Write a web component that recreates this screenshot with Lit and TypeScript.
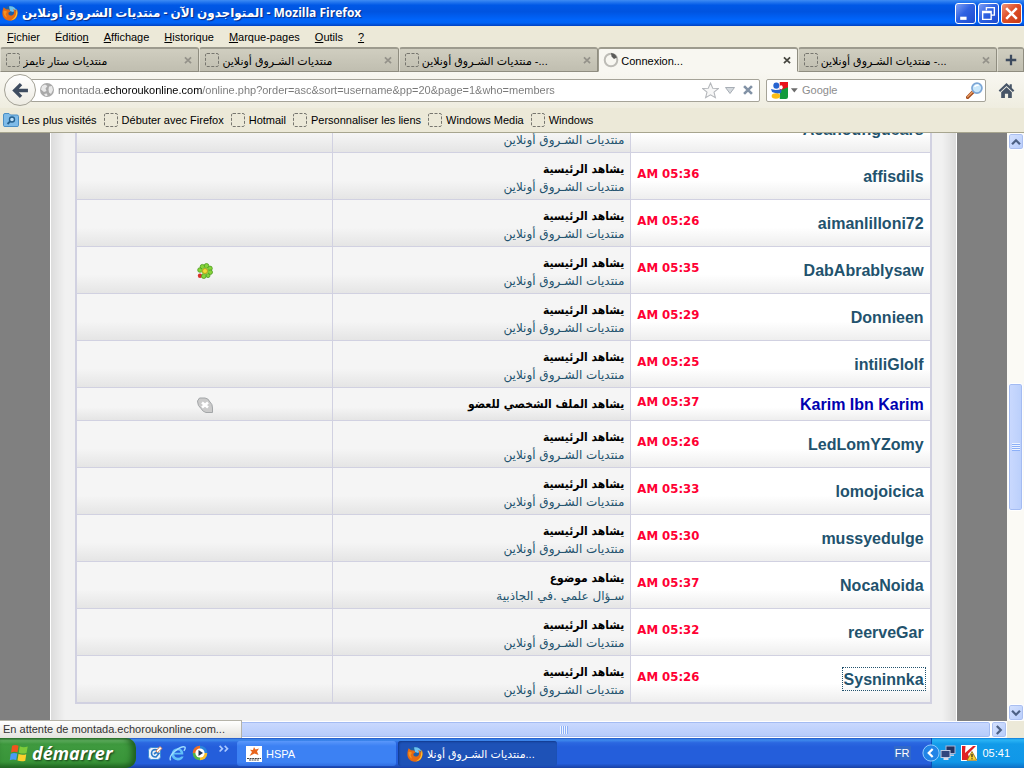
import { LitElement, html, svg, css, nothing } from "lit";
import { customElement } from "lit/decorators.js";
import { classMap } from "lit/directives/class-map.js";

const FORUM = "منتديات الشـروق أونلاين";
const HOME_VIEW = "يشاهد الرئيسية";

interface Member {
  name: string;
  time: string;
  action: string;
  target?: string;
  icon?: "flower" | "offline";
  admin?: boolean;
  focused?: boolean;
}

const members: Member[] = [
  { name: "Acanounguears", time: "", action: "", target: FORUM },
  { name: "affisdils", time: "AM 05:36", action: HOME_VIEW, target: FORUM },
  { name: "aimanlilloni72", time: "AM 05:26", action: HOME_VIEW, target: FORUM },
  { name: "DabAbrablysaw", time: "AM 05:35", action: HOME_VIEW, target: FORUM, icon: "flower" },
  { name: "Donnieen", time: "AM 05:29", action: HOME_VIEW, target: FORUM },
  { name: "intiliGlolf", time: "AM 05:25", action: HOME_VIEW, target: FORUM },
  { name: "Karim Ibn Karim", time: "AM 05:37", action: "يشاهد الملف الشخصي للعضو", icon: "offline", admin: true },
  { name: "LedLomYZomy", time: "AM 05:26", action: HOME_VIEW, target: FORUM },
  { name: "lomojoicica", time: "AM 05:33", action: HOME_VIEW, target: FORUM },
  { name: "mussyedulge", time: "AM 05:30", action: HOME_VIEW, target: FORUM },
  { name: "NocaNoida", time: "AM 05:37", action: "يشاهد موضوع", target: "سـؤال علمي .في الجاذبية" },
  { name: "reerveGar", time: "AM 05:32", action: HOME_VIEW, target: FORUM },
  { name: "Sysninnka", time: "AM 05:26", action: HOME_VIEW, target: FORUM, focused: true },
];

const icon = (size: number, body: unknown) =>
  html`<svg width=${size} height=${size} viewBox="0 0 16 16" aria-hidden="true">${body}</svg>`;

const firefox = svg`
  <circle cx="8" cy="8" r="7.2" fill="#1d5fa8"/>
  <path d="M7 1.4C10 .6 13 2 14 4.500L11 7 8 6Z" fill="#6cc3f0"/>
  <path d="M1.600 2.200 4 4.200 7 4.600 8.600 6.400 6.600 7.400 6.400 9.200C7.600 11 10.400 11 11.600 9.200 12.600 7.600 12.200 5.400 11 4 13.200 4.600 14 6 14.200 7.200L14.600 3.800C16.600 8 15.600 15.600 8 15.800 2.600 15.600.2 11.600.4 8.200.4 5.600 1 4.200 1.600 2.200Z" fill="#e66a12"/>
  <path d="M14.600 3.800C16.600 8 15 14.800 8.600 15.400 12 13.800 14.200 11 14.200 7.200Z" fill="#fbc531"/>
  <path d="M1.600 6C2.400 5.400 4 5.800 5 6.800L3.600 9 5 12.600C3 12 1.200 9 1.600 6Z" fill="#f7931e"/>`;

const placeholder = svg`<rect x="1.500" y="1.500" width="13" height="13" rx="1.500" fill="none" stroke="#77766f" stroke-dasharray="3 1.500"/>`;
const cross = svg`<path d="M4.500 5 11.500 11.500M11.500 5 4.500 11.500" stroke="currentColor" stroke-width="2" fill="none"/>`;
const throbber = svg`
  <circle cx="8" cy="8" r="6.300" fill="none" stroke="#bdbcb6" stroke-width="2"/>
  <path d="M8 1A7 7 0 0 1 14 5.500L11 7 8.500 4.500Z" fill="#5b5b59"/>`;
const backArrow = svg`<path d="M8.500 2 2.500 8 8.500 14M3.500 8H15" stroke="#3e4c60" stroke-width="3.200" fill="none"/>`;
const globe = svg`
  <circle cx="8" cy="8" r="7" fill="#a9a9a9"/>
  <path d="M3 4 6 2.500 8.500 4 6.500 6.500 7.500 9 5 10 2 7.500ZM10 4.500 13 4 14 8 12 12 10 10.500 9.500 7.500ZM5 12 8 11.500 8.500 14 6.500 14Z" fill="#e9e9e9"/>`;
const star = svg`<path d="M8 1 10.100 5.800 15.300 6.200 11.300 9.600 12.600 14.800 8 12 3.400 14.800 4.700 9.600.7 6.200 5.900 5.800Z" fill="#f7f7f7" stroke="#b4b7bb"/>`;
const dropdown = svg`<path d="M3.500 5.500H12.500L8 11.500Z" fill="#d5dade" stroke="#a7adb5"/>`;
const stop = svg`<path d="M3.500 3.500 12.500 12.500M12.500 3.500 3.500 12.500" stroke="#8292a6" stroke-width="3"/>`;
const google = svg`
  <path d="M8 0H16V8H8Z" fill="#e8111a"/><path d="M8 8 16 5V14Q16 16 14 16H8Z" fill="#129a3c"/>
  <path d="M0 0H8V16H0Z" fill="#fff"/>
  <ellipse cx="5" cy="3.400" rx="2.800" ry="3" fill="#2563d0"/><ellipse cx="9.500" cy="5" rx="1.500" ry="2" fill="#fff"/>
  <path d="M0 6.500 4 7.500 10 7 9.500 10 6 11 1 9.500Z" fill="#2563d0"/>
  <ellipse cx="4.600" cy="13.200" rx="4" ry="2.500" fill="#fbbd16"/>`;
const magnifier = svg`
  <path d="M1.500 14.500 7 9" stroke="#a44c1d" stroke-width="3.200" stroke-linecap="round"/>
  <path d="M1.500 14 6.500 9" stroke="#eda36a" stroke-width="1.200" stroke-linecap="round"/>
  <circle cx="10.300" cy="5.700" r="4.700" fill="#c9e7fb" stroke="#7ba6d6" stroke-width="1.600"/>
  <path d="M8 4.500Q9.500 2.600 12 3.200" stroke="#fff" stroke-width="1.400" fill="none"/>`;
const house = svg`<path d="M8 1 .6 8 2 9.400 8 3.800 14 9.400 15.400 8 13 5.700V2H11V3.800Z" fill="#475567"/><path d="M8 5 3 9.600V15H6.500V11H9.500V15H13V9.600Z" fill="#475567"/>`;
const folder = svg`
  <path d="M.5 3Q.5 1.500 2 1.500H6L7.500 3H14Q15.500 3 15.500 4.500V13.500Q15.500 14.500 14 14.500H2Q.5 14.500.5 13.500Z" fill="#7fbbe8" stroke="#4b8fc6"/>
  <circle cx="9" cy="7.500" r="2.500" fill="#bfe2fa" stroke="#27618f" stroke-width="1.400"/><path d="M7 9.500 4.500 12" stroke="#27618f" stroke-width="1.800"/>`;
const flower = svg`
  <circle cx="3" cy="12.800" r="2.200" fill="#d8322c"/>
  <g fill="#86d43a" stroke="#4d9c1e" stroke-width=".8">
    <circle cx="9.500" cy="2.800" r="2.300"/><circle cx="13" cy="5.400" r="2.300"/><circle cx="13.200" cy="9.200" r="2.300"/>
    <circle cx="11" cy="12.600" r="2"/><circle cx="6.800" cy="13.200" r="2.300"/><circle cx="3" cy="7" r="2.300"/><circle cx="5.400" cy="3.600" r="2.200"/>
  </g>
  <circle cx="8" cy="8" r="3.600" fill="#86d43a"/><circle cx="8" cy="8" r="2.500" fill="#f3df3a" stroke="#bd8f1c" stroke-width=".8"/>`;
const offline = svg`
  <path d="M2.500 1H8Q11 1 13 5Q15.500 7 15.500 11V15.500H9Q6 15 4 11.500Q.5 9 .5 4Z" fill="#cbcbcb" stroke="#a3a6a8"/>
  <path d="M5 5.500 11 10.500M11 5.500 5 10.500" stroke="#fff" stroke-width="2.600"/>`;
const windowsFlag = svg`
  <path d="M2.500 2.200Q5 1 7.600 2.200L6.800 7.400Q4.200 6.400 1.600 7.500Z" fill="#f0541e"/>
  <path d="M8.600 2.600Q11.500 4 15 2.800L14 8Q11 9 7.800 7.700Z" fill="#7ccb3a"/>
  <path d="M1.400 8.500Q4 7.400 6.600 8.400L5.800 13.600Q3.200 12.600.6 13.700Z" fill="#4a9af5"/>
  <path d="M7.600 8.800Q10.800 10 13.800 9L13 14.200Q10 15.200 6.800 14Z" fill="#fbd02c"/>`;
const mailTool = svg`
  <rect x="1.500" y="2.500" width="12" height="12" rx="3" fill="#e8f1fb" stroke="#3b8ad6"/>
  <path d="M10.500 5Q5 3.500 4.500 8 4.500 12 9 12L12 8.500 9 7.500 7 9" fill="none" stroke="#2b79c8" stroke-width="1.600"/>
  <path d="M9 6 13 1.500 15 3.500 10.500 7.500Z" fill="#fff" stroke="#e0773c" stroke-width=".8"/>`;
const explorer = svg`
  <path d="M13.500 9H4.800Q5.500 12 8.500 12 10.500 12 11.500 10.800H13.800Q12.200 14.500 8.200 14.500 2.500 14 2.400 8.500 3 3.200 8.200 3 13.800 3.500 13.500 9ZM5 7.200H11Q10.500 5 8.200 5 5.600 5 5 7.200Z" fill="#62c0f8"/>
  <path d="M1.500 14.500Q-.5 11 6 5.500 12.500.5 15 2 15.800 3 14 5.500" fill="none" stroke="#9fdcff" stroke-width="1.300"/>`;
const mediaPlayer = svg`
  <circle cx="8" cy="8" r="7.300" fill="#2c84d8"/><path d="M8 .7A7.300 7.300 0 0 0 .7 8H8Z" fill="#ed6c25"/><path d="M.7 8A7.300 7.300 0 0 0 8 15.300V8Z" fill="#52b348"/><path d="M15.300 8A7.300 7.300 0 0 1 8 15.300V8Z" fill="#f7bd29"/>
  <circle cx="8" cy="8" r="4.600" fill="#fff"/><path d="M6.500 5 11 8 6.500 11Z" fill="#25344e"/>`;
const hspa = svg`
  <rect width="16" height="16" fill="#fff"/>
  <path d="M8 1 9.500 3.500 13 2.500 11 5.500 12.500 9 8.500 7.500 3.500 10 6 6 4 3.800 7 4Z" fill="#e8641b"/>
  <path d="M1 12.500H15M3 14H13" stroke="#444" stroke-dasharray="2 .6"/>`;
const network = svg`
  <rect x="6" y="1" width="9" height="7.500" fill="#23335f" stroke="#aab6d6"/><path d="M9 9.500H14V11H9Z" fill="#c8d0e2"/>
  <rect x="1" y="5.500" width="9" height="7" fill="#31457d" stroke="#c0cae2"/><path d="M3.500 13H8.500V15H3.500Z" fill="#d6dceb"/>`;
const antivirus = svg`
  <rect width="16" height="16" fill="#fff"/><path d="M1 1H4.500L4 8 12 1H15L7 9 9 15H1Z" fill="#df1f24"/>
  <path d="M11 6.500 15.800 15.300H6Z" fill="#fcd535" stroke="#8a6a11" stroke-width=".8"/><path d="M11 9V12.200M11 13.300V14.300" stroke="#222" stroke-width="1.200"/>`;
const chevron = (d: string) => svg`<path d=${d} stroke="#4d6185" stroke-width="2.600" fill="none"/>`;
const UP = "M3.500 10.500 8 6 12.500 10.500";
const DOWN = "M3.500 5.500 8 10 12.500 5.500";
const LEFT = "M10.500 3.500 6 8 10.500 12.500";
const RIGHT = "M5.500 3.500 10 8 5.500 12.500";

@customElement("title-bar")
class TitleBar extends LitElement {
  static styles = css`
    :host { display: block; }
    .bar {
      display: flex; align-items: center; gap: 4px; height: 26px; padding: 0 2px; box-sizing: border-box;
      background: linear-gradient(#3f8cf3 0, #2a7cf0 6%, #0058e6 20%, #0054e0 45%, #0064fa 75%, #0063f5 88%, #0040c0 100%);
    }
    h1 {
      flex: 1; margin: 0; color: #fff; font: bold 12px/26px "Open Sans", "DejaVu Sans", sans-serif;
      text-shadow: 1px 1px 1px #0a2a80; white-space: nowrap; overflow: hidden;
    }
    .buttons { display: flex; gap: 2px; }
    button {
      width: 21px; height: 21px; padding: 0; border: 1px solid #fff; border-radius: 3px; display: grid; place-items: center;
      background: linear-gradient(135deg, #7f9ff5, #2f62e2 45%, #1d4bcf); color: #fff;
    }
    .close { background: linear-gradient(135deg, #f0957a, #df4f28 45%, #c73a14); }
  `;
  render() {
    return html`<header class="bar">
      ${icon(16, firefox)}
      <h1>المتواجدون الآن - منتديات الشروق أونلاين - Mozilla Firefox</h1>
      <div class="buttons">
        <button aria-label="Réduire">${icon(17, svg`<path d="M3 11H9V14H3Z" fill="#fff"/>`)}</button>
        <button aria-label="Restaurer">${icon(17, svg`<path d="M6 5V2.500H13.500V9.500H11M5.500 2.500H14M2.500 6H10.500V13.500H2.500ZM2.500 7H10.500" stroke="#fff" stroke-width="1.300" fill="none"/>`)}</button>
        <button class="close" aria-label="Fermer">${icon(17, svg`<path d="M3 3 13 13M13 3 3 13" stroke="#fff" stroke-width="2.400"/>`)}</button>
      </div>
    </header>`;
  }
}

@customElement("browser-chrome")
class BrowserChrome extends LitElement {
  static styles = css`
    :host { display: block; background: #ece9d8; color: #000; font: 11px/14px "Liberation Sans", "DejaVu Sans", sans-serif; }
    button, input { font: inherit; color: inherit; margin: 0; padding: 0; border: 0; background: none; }
    svg { display: block; flex: none; }
    .menu { display: flex; gap: 15px; height: 21px; align-items: center; padding: 0 7px; }
    .tabs { display: flex; height: 25px; }
    .tab {
      flex: 1; min-width: 0; box-sizing: border-box; display: flex; align-items: center; gap: 2px; padding: 0 3px 0 4px;
      background: linear-gradient(#d0cec0, #c0beb0); border: 1px solid #8f8d80; border-top: 2px solid #9d9b8e; border-left-color: #e0ded2;
      border-radius: 3px 3px 0 0;
    }
    .tab.active { background: #f8f7f1; border-bottom-color: #f8f7f1; border-left-color: #9d9b8e; }
    .label { flex: 1; text-align: left; white-space: nowrap; overflow: hidden; padding-top: 2px; }
    .close { color: #94928a; }
    .active .close { color: #45453f; }
    .tab.new { flex: none; width: 27px; display: grid; place-items: center; padding: 0; color: #3c4a5e; }
    .nav { display: flex; align-items: center; height: 36px; padding: 0 9px 0 4px; background: linear-gradient(#f8f7f1, #efede0); }
    .back {
      width: 32px; height: 32px; margin-right: -6px; border: 1px solid #a3a196; border-radius: 50%; display: grid; place-items: center;
      background: linear-gradient(#fff, #edebe2); z-index: 1; flex: none; box-sizing: border-box;
    }
    .field { display: flex; align-items: center; height: 23px; box-sizing: border-box; background: #fff; border: 1px solid #a5a398; border-radius: 2px; }
    .address { flex: 1; padding: 0 4px 0 8px; gap: 3px; }
    .address input {
      flex: 1; min-width: 0; outline: none; color: transparent;
      background: linear-gradient(90deg, #777 45px, #000 45px, #000 144px, #777 144px); background-clip: text; -webkit-background-clip: text;
    }
    .search { width: 220px; margin: 0 12px 0 6px; padding: 0 2px 0 4px; gap: 1px; }
    .search input { flex: 1; min-width: 0; padding-left: 2px; outline: none; }
    .search input::placeholder { color: #8c8c8c; opacity: 1; }
    .bookmarks { display: flex; gap: 6px; height: 25px; align-items: center; padding: 0 3px; border-bottom: 1px solid #a7a58f; box-sizing: border-box; }
    .bookmarks a { display: flex; align-items: center; gap: 3px; color: #000; text-decoration: none; white-space: nowrap; }
  `;
  menus = [["", "F", "ichier"], ["Éditio", "n", ""], ["", "A", "ffichage"], ["", "H", "istorique"], ["", "M", "arque-pages"], ["", "O", "utils"], ["", "?", ""]];
  tabs = [
    { text: "منتديات ستار تايمز" },
    { text: FORUM },
    { text: FORUM + " -..." },
    { text: "Connexion...", active: true },
    { text: FORUM + " -..." },
  ];
  bookmarks = ["Les plus visités", "Débuter avec Firefox", "Hotmail", "Personnaliser les liens", "Windows Media", "Windows"];
  render() {
    return html`
      <nav class="menu">${this.menus.map(([a, k, b]) => html`<button>${a}<u>${k}</u>${b}</button>`)}</nav>
      <div class="tabs">
        ${this.tabs.map((t) => html`<div class=${classMap({ tab: true, active: !!t.active })}>
          ${icon(16, t.active ? throbber : placeholder)}
          <button class="label">${t.text}</button>
          <button class="close" aria-label="Fermer l’onglet">${icon(14, cross)}</button>
        </div>`)}
        <button class="tab new" aria-label="Nouvel onglet">${icon(14, svg`<path d="M8 2V14M2 8H14" stroke="currentColor" stroke-width="2.600"/>`)}</button>
      </div>
      <div class="nav">
        <button class="back" aria-label="Précédent">${icon(17, backArrow)}</button>
        <div class="field address">
          ${icon(16, globe)}
          <input aria-label="Adresse" value="montada.echoroukonline.com/online.php?order=asc&sort=username&pp=20&page=1&who=members">
          <button aria-label="Marquer cette page">${icon(17, star)}</button>
          <button aria-label="Historique">${icon(16, dropdown)}</button>
          <button aria-label="Arrêter">${icon(14, stop)}</button>
        </div>
        <div class="field search">
          ${icon(17, google)}${icon(10, svg`<path d="M3 5H14L8.500 12Z" fill="#6c6c6c"/>`)}
          <input aria-label="Recherche" placeholder="Google">
          <button aria-label="Rechercher">${icon(17, magnifier)}</button>
        </div>
        <button aria-label="Accueil">${icon(17, house)}</button>
      </div>
      <nav class="bookmarks">${this.bookmarks.map((b, i) => html`<a href="#">${icon(16, i ? placeholder : folder)}${b}</a>`)}</nav>`;
  }
}

@customElement("members-table")
class MembersTable extends LitElement {
  static styles = css`
    :host { display: block; }
    table { width: 100%; table-layout: fixed; border-collapse: separate; border-spacing: 0; border: 2px solid #d1d1e1; box-sizing: border-box; }
    .who, .doing { width: 35%; }
    td { box-sizing: border-box; height: 47px; padding: 0 6px; border-bottom: 1px solid #d1d1e1; background: linear-gradient(#f5f5f5 60%, #e5e5e5); }
    td + td { border-right: 1px solid #d1d1e1; }
    .who { background: linear-gradient(#fff 60%, #eee); }
    .short td { height: 33px; }
    .tall .doing { padding-top: 4px; }
    tr:last-child td { height: 46px; border-bottom: 0; }
    .line { display: flex; align-items: center; justify-content: space-between; }
    .name { color: #22526d; font: bold 16px/18px "Liberation Sans", sans-serif; text-decoration: none; padding-top: 2px; }
    .admin { color: #0000b0; }
    .focused { outline: 1px dotted #22526d; outline-offset: 1px; }
    .time { color: #f03; font: bold 13px/16px "DejaVu Sans Condensed", "DejaVu Sans", sans-serif; padding-bottom: 5px; }
    .action { min-height: 18px; color: #000; font: bold 12px/18px "DejaVu Sans Condensed", "DejaVu Sans", sans-serif; }
    .target { display: block; color: #22526d; font: 12px/18px "DejaVu Sans", sans-serif; text-decoration: none; }
    .state { text-align: center; }
    svg { vertical-align: middle; }
  `;
  render() {
    return html`<table dir="rtl"><tbody>${members.map((m) => html`
      <tr class=${m.target ? "tall" : "short"}>
        <td class="who"><div class="line">
          <a href="#" class=${classMap({ name: true, admin: !!m.admin, focused: !!m.focused })}>${m.name}</a>
          <span class="time" dir="ltr">${m.time}</span>
        </div></td>
        <td class="doing"><div class="action">${m.action}</div>${m.target ? html`<a href="#" class="target">${m.target}</a>` : nothing}</td>
        <td class="state">${m.icon ? icon(16, m.icon === "flower" ? flower : offline) : nothing}</td>
      </tr>`)}</tbody></table>`;
  }
}

@customElement("task-bar")
class TaskBar extends LitElement {
  static styles = css`
    :host { display: block; }
    button { margin: 0; padding: 0; border: 0; background: none; color: #fff; font: inherit; }
    svg { display: block; flex: none; }
    .bar {
      display: flex; height: 30px; color: #fff; font: 11px/14px "Liberation Sans", "DejaVu Sans", sans-serif;
      background: linear-gradient(#1f52c4 0, #3f8ced 6%, #2b67e0 16%, #245edb 30%, #245edb 85%, #1941a5 100%);
    }
    .start {
      width: 136px; display: flex; align-items: center; gap: 3px; padding-left: 9px; border-radius: 0 10px 10px 0;
      background: linear-gradient(#2f7a31 0, #66b866 8%, #3f9a3f 20%, #399539 80%, #256f26 100%); box-shadow: inset -4px 0 6px #1d5c1e;
      font: italic bold 18px/24px "Open Sans", sans-serif; text-shadow: 1px 1px 2px #153a15;
    }
    .quick { display: flex; align-items: center; gap: 6px; padding: 0 5px 0 11px; }
    .more { align-self: flex-start; }
    .tasks { flex: 1; display: flex; gap: 2px; padding: 3px 0 2px; }
    .task {
      width: 159px; display: flex; align-items: center; gap: 4px; padding-left: 9px; border-radius: 3px;
      background: linear-gradient(#5a97fb, #3c81f3 20%, #3c81f3 85%, #2f6ce0); white-space: nowrap;
    }
    .current { background: #1e52b7; box-shadow: inset 1px 1px 2px #123a8c; }
    .language { align-self: center; margin-right: 20px; padding: 0 2px 0 1px; background: #3168c8; }
    .tray {
      display: flex; align-items: center; gap: 5px; padding-right: 14px; border-left: 1px solid #0a4fb5;
      background: linear-gradient(#0f77d8 0, #2bb5f5 6%, #129be9 20%, #1097e8 80%, #0d6fc6 100%);
    }
    .hide { margin: 0 -5px 0 -10px; }
  `;
  render() {
    return html`<footer class="bar">
      <button class="start">${icon(20, windowsFlag)}démarrer</button>
      <div class="quick">
        <button aria-label="Courrier">${icon(16, mailTool)}</button>
        <button aria-label="Internet Explorer">${icon(17, explorer)}</button>
        <button aria-label="Lecteur multimédia">${icon(16, mediaPlayer)}</button>
        <button class="more" aria-label="Plus">${icon(18, svg`<path d="M5 7 7.500 9.500 5 12M9.500 7 12 9.500 9.500 12" stroke="#a9c8ff" stroke-width="1.500" fill="none"/>`)}</button>
      </div>
      <div class="tasks">
        <button class="task">${icon(16, hspa)}HSPA</button>
        <button class="task current">${icon(16, firefox)}منتديات الشـروق أونلا...</button>
      </div>
      <span class="language">FR</span>
      <div class="tray">
        <button class="hide" aria-label="Masquer">${icon(18, svg`<circle cx="8" cy="8" r="7.200" fill="#2184e6" stroke="#9ed4ff" stroke-width=".8"/><path d="M9.500 4.500 6 8 9.500 11.500" stroke="#fff" stroke-width="2" fill="none"/>`)}</button>
        ${icon(16, network)}${icon(16, antivirus)}
        <time>05:41</time>
      </div>
    </footer>`;
  }
}

@customElement("app-root")
class AppRoot extends LitElement {
  static styles = css`
    :host { display: flex; flex-direction: column; height: 100vh; overflow: hidden; background: #ece9d8; }
    main { flex: 1; min-height: 0; display: grid; grid-template: minmax(0, 1fr) 17px / minmax(0, 1fr) 17px; position: relative; }
    .view { background: #808080; overflow: hidden; }
    .page {
      width: 90%; min-height: calc(100% + 29px); box-sizing: border-box; margin: -29px auto 0; padding: 0 24px 17px; border: 1px solid #fff; border-width: 0 1px;
      background: linear-gradient(90deg, #dcdcdc, #f1f1f1 14px, #f1f1f1 calc(100% - 14px), #dcdcdc);
    }
    .vertical, .horizontal { display: flex; background: #fbfaf5; }
    .vertical { flex-direction: column; padding: 0 1px; }
    .vertical .space { flex: 234; }
    .vertical .rest { flex: 194; }
    .horizontal .space { flex: 120; }
    button {
      flex: none; width: 16px; height: 17px; padding: 0; border: 1px solid #fff; border-radius: 3px; display: grid; place-items: center;
      background: linear-gradient(135deg, #d5e2fe, #b7ccfb); box-shadow: inset 0 0 0 1px #aabff0;
    }
    .thumb {
      display: grid; place-items: center; border: 1px solid #fff; border-radius: 3px; background: linear-gradient(90deg, #cad9fe, #bacffb);
      box-shadow: inset 0 0 0 1px #a3bbf2;
    }
    .vertical .thumb { flex: 127; }
    .horizontal .thumb { flex: 853; background: linear-gradient(#cad9fe, #b5cbfb); }
    .grip { width: 8px; height: 8px; background: repeating-linear-gradient(90deg, #eef4fe 0 1px, #8cb0f8 1px 2px); }
    .vertical .grip { background: repeating-linear-gradient(#eef4fe 0 1px, #8cb0f8 1px 2px); }
    .status {
      position: absolute; left: 0; bottom: 0; box-sizing: border-box; height: 18px; min-width: 242px; padding: 0 3px; color: #333;
      font: 11px/17px "Liberation Sans", "DejaVu Sans", sans-serif; background: linear-gradient(#fff, #e4e3dd); border: 1px solid #b5b3a8; border-width: 1px 1px 0 0;
    }
  `;
  render() {
    return html`
      <title-bar></title-bar>
      <browser-chrome></browser-chrome>
      <main>
        <div class="view"><div class="page"><members-table></members-table></div></div>
        <div class="vertical">
          <button aria-label="Vers le haut">${icon(14, chevron(UP))}</button>
          <div class="space"></div><div class="thumb"><div class="grip"></div></div><div class="rest"></div>
          <button aria-label="Vers le bas">${icon(14, chevron(DOWN))}</button>
        </div>
        <div class="horizontal">
          <button aria-label="Vers la gauche">${icon(14, chevron(LEFT))}</button>
          <div class="space"></div><div class="thumb"><div class="grip"></div></div>
          <button aria-label="Vers la droite">${icon(14, chevron(RIGHT))}</button>
        </div>
        <div class="status" role="status">En attente de montada.echoroukonline.com...</div>
      </main>
      <task-bar></task-bar>`;
  }
}
